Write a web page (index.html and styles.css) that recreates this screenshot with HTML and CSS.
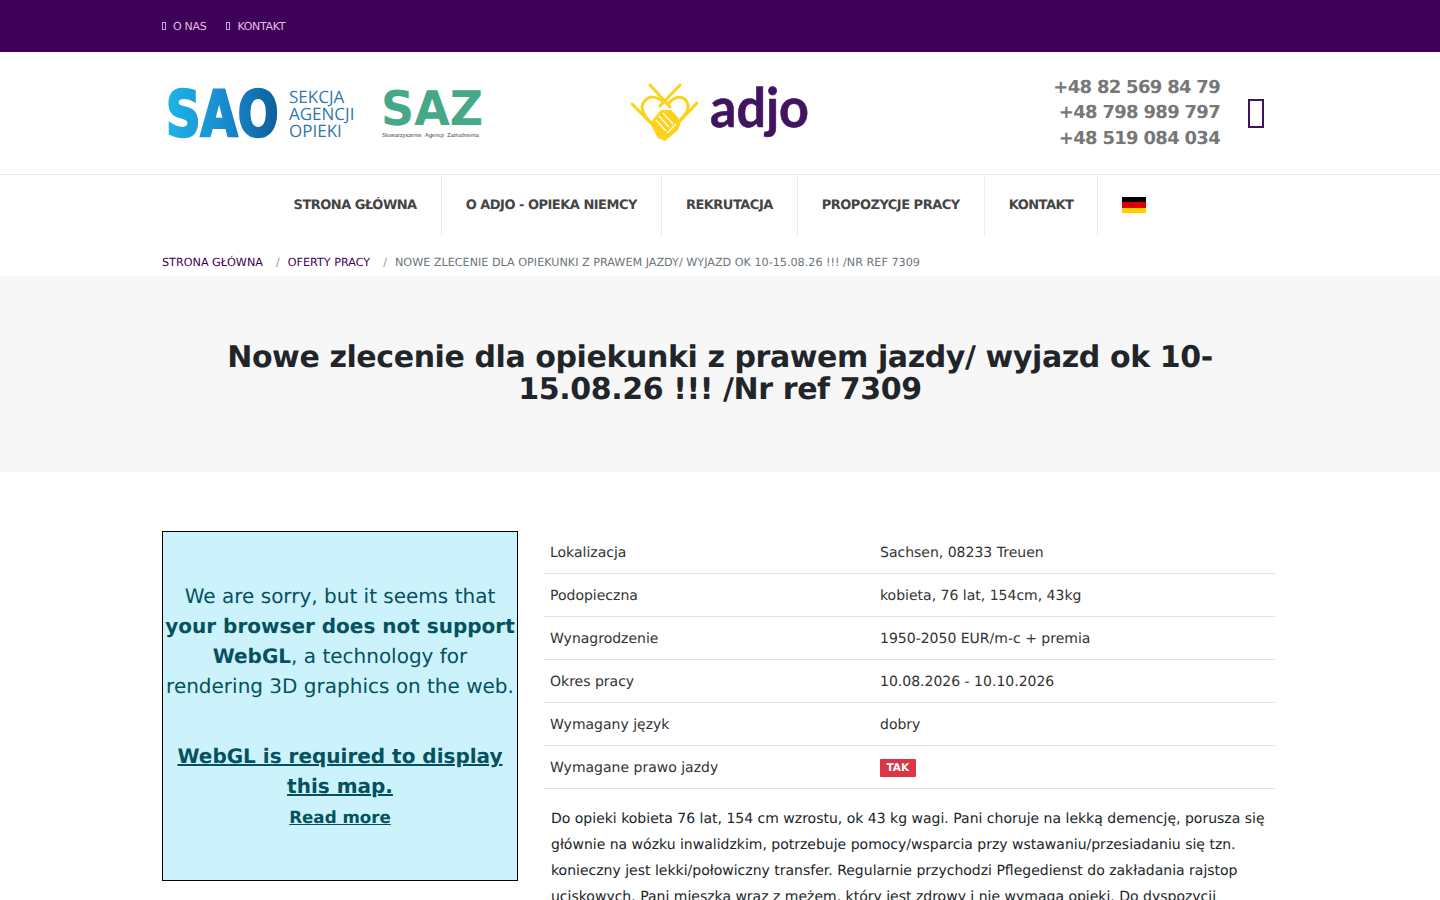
FILE: index.html
```html
<!DOCTYPE html>
<html lang="pl">
<head>
    <meta charset="UTF-8">
    <title>Nowe zlecenie dla opiekunki z prawem jazdy</title>
    <link rel="stylesheet" href="styles.css">
</head>
<body>

<div class="topbar">
    <div class="wrap topbar-in">
        <a class="top-link"><i class="tofu"></i>O NAS</a>
        <a class="top-link"><i class="tofu"></i>KONTAKT</a>
    </div>
</div>

<header class="wrap head">
    <div class="logos">
        <svg class="logo-sao" width="194" height="60" viewBox="0 0 194 60">
            <defs>
                <linearGradient id="saoFill" x1="0" x2="1" y1="0" y2="0">
                    <stop offset="0" stop-color="#1fb4e8"/>
                    <stop offset="0.55" stop-color="#1788cc"/>
                    <stop offset="1" stop-color="#0d5f9a"/>
                </linearGradient>
            </defs>
            <text class="sao-mark" transform="translate(2 53) scale(1 1.32)" fill="url(#saoFill)" stroke="url(#saoFill)">SAO</text>
            <text class="sao-text" x="125" y="20">SEKCJA</text>
            <text class="sao-text" x="125" y="37">AGENCJI</text>
            <text class="sao-text" x="125" y="54">OPIEKI</text>
        </svg>
        <svg class="logo-saz" width="100" height="52" viewBox="0 0 100 52">
            <text class="saz-mark" transform="translate(0 38) scale(1 1.04)">SAZ</text>
            <text class="saz-text" x="1" y="50">Stowarzyszenie Agencji Zatrudnienia</text>
        </svg>
    </div>
    <svg class="logo-adjo" width="182" height="64" viewBox="0 0 182 64">
        <g fill="none" stroke="#fcd31a" stroke-width="3" stroke-linecap="round">
            <path d="M21 4 L41 26 M51 4 L31 25 M3 23 L22 42 M68 22 L52 39"/>
            <path d="M21 41 C13 32 11 26 15 21 C20 14 28 15 34 21 M40 22 C46 15 54 14 58 21 C61 27 58 32 52 38"/>
        </g>
        <path d="M21 42 L32 29 L42 29 L47 34 L52 41 L49 49 L36 60 L29 57 Z" fill="#fcd31a"/>
        <g fill="none" stroke="#fff" stroke-width="1.2">
            <path d="M27 39 L37 50 M30 35 L40 46 M34 32 L44 43 M38 52 L47 43"/>
        </g>
        <text class="adjo-mark" transform="translate(81 46) scale(1 1.05)">adjo</text>
    </svg>
    <div class="head-right">
        <div class="phones">
            <div>+48 82 569 84 79</div>
            <div>+48 798 989 797</div>
            <div>+48 519 084 034</div>
        </div>
        <i class="tofu-big"></i>
    </div>
</header>

<nav class="nav">
    <a class="nav-item">STRONA GŁÓWNA</a>
    <a class="nav-item">O ADJO - OPIEKA NIEMCY</a>
    <a class="nav-item">REKRUTACJA</a>
    <a class="nav-item">PROPOZYCJE PRACY</a>
    <a class="nav-item">KONTAKT</a>
    <a class="nav-item nav-flag"><span class="flag"></span></a>
</nav>

<div class="wrap crumbs">
    <a>STRONA GŁÓWNA</a>
    <span class="sep">/</span>
    <a>OFERTY PRACY</a>
    <span class="sep">/</span>
    <span class="current">NOWE ZLECENIE DLA OPIEKUNKI Z PRAWEM JAZDY/ WYJAZD OK 10-15.08.26 !!! /NR REF 7309</span>
</div>

<section class="hero">
    <h1>Nowe zlecenie dla opiekunki z prawem jazdy/ wyjazd ok 10-15.08.26 !!! /Nr ref 7309</h1>
</section>

<main class="wrap content">
    <aside class="map-box">
        <p>We are sorry, but it seems that <b>your browser does not support WebGL</b>, a technology for rendering 3D graphics on the web.</p>
        <p class="map-need"><a>WebGL is required to display this map.</a></p>
        <a class="map-more">Read more</a>
    </aside>
    <div class="details">
        <table class="facts">
            <tr><td>Lokalizacja</td><td>Sachsen, 08233 Treuen</td></tr>
            <tr><td>Podopieczna</td><td>kobieta, 76 lat, 154cm, 43kg</td></tr>
            <tr><td>Wynagrodzenie</td><td>1950-2050 EUR/m-c + premia</td></tr>
            <tr><td>Okres pracy</td><td>10.08.2026 - 10.10.2026</td></tr>
            <tr><td>Wymagany język</td><td>dobry</td></tr>
            <tr><td>Wymagane prawo jazdy</td><td><span class="badge">TAK</span></td></tr>
        </table>
        <p class="desc">Do opieki kobieta 76 lat, 154 cm wzrostu, ok 43 kg wagi. Pani choruje na lekką demencję, porusza się głównie na wózku inwalidzkim, potrzebuje pomocy/wsparcia przy wstawaniu/przesiadaniu się tzn. konieczny jest lekki/połowiczny transfer. Regularnie przychodzi Pflegedienst do zakładania rajstop uciskowych. Pani mieszka wraz z mężem, który jest zdrowy i nie wymaga opieki. Do dyspozycji</p>
    </div>
</main>

</body>
</html>
```

FILE: styles.css
```css
*{
    box-sizing: border-box;
}
html,body{
    margin: 0;
    padding: 0;
}
body{
    font-family: "DejaVu Sans", sans-serif;
    font-size: 14px;
    color: #212529;
    background: #fff;
    text-rendering: geometricPrecision;
}
svg{
    overflow: visible;
}

.wrap{
    width: 1116px;
    margin: 0 auto;
}

/* top bar */
.topbar{
    height: 52px;
    background: #3f0058;
}
.topbar-in{
    height: 52px;
    display: flex;
    align-items: center;
    gap: 20px;
}
.top-link{
    display: flex;
    align-items: center;
    font-size: 11px;
    letter-spacing: -0.3px;
    color: #e2bfe8;
}
.tofu{
    width: 4px;
    height: 8px;
    border: 1px solid #c9a3d4;
    margin-right: 7px;
}

/* header */
.head{
    height: 122px;
    display: grid;
    grid-template-columns: 1fr auto 1fr;
    align-items: center;
}
.logos{
    display: flex;
    align-items: center;
    gap: 23px;
}
.logo-sao{
    margin-left: 2px;
}
.sao-mark{
    font-family: "DejaVu Sans", sans-serif;
    font-weight: bold;
    font-size: 48px;
    stroke-width: 2px;
}
.sao-text{
    font-family: "Open Sans", sans-serif;
    font-size: 17px;
    fill: #2f79ad;
}
.saz-mark{
    font-family: "DejaVu Sans", sans-serif;
    font-weight: bold;
    font-size: 46px;
    fill: #47a887;
}
.saz-text{
    font-family: "Liberation Sans", sans-serif;
    font-size: 5.7px;
    word-spacing: 2px;
    fill: #444;
}
.adjo-mark{
    font-family: "Lato", sans-serif;
    font-weight: bold;
    font-size: 52px;
    fill: #42135f;
    stroke: #42135f;
    stroke-width: 0.6px;
}
.head-right{
    display: flex;
    align-items: center;
    justify-content: flex-end;
    gap: 28px;
    padding-right: 14px;
}
.phones{
    font-size: 18px;
    font-weight: bold;
    letter-spacing: -0.7px;
    line-height: 25.5px;
    text-align: right;
    color: #777;
}
.tofu-big{
    width: 16px;
    height: 29px;
    border: 2px solid #42135f;
}

/* menu */
.nav{
    height: 62px;
    border-top: 1px solid #e9e9e9;
    display: flex;
    justify-content: center;
}
.nav-item{
    display: flex;
    align-items: center;
    padding: 0 24px 1px;
    border-right: 1px solid #ececec;
    font-size: 13px;
    font-weight: bold;
    letter-spacing: -0.5px;
    color: #444;
}
.nav-flag{
    border-right: 0;
}
.flag{
    width: 24px;
    height: 16px;
    background: linear-gradient(#000 33.3%, #d00 33.3%, #d00 66.6%, #ffce00 66.6%);
}

/* breadcrumb */
.crumbs{
    height: 40px;
    display: flex;
    align-items: center;
    padding-top: 12px;
    font-size: 11.2px;
    color: #3f0058;
}
.sep{
    margin: 0 8px 0 13px;
    color: #999;
}
.current{
    color: #6c757d;
}

/* title */
.hero{
    height: 196px;
    padding-top: 66px;
    background: #f7f7f7;
}
.hero h1{
    width: 1000px;
    margin: 0 auto;
    font-size: 30px;
    letter-spacing: -0.4px;
    line-height: 32px;
    text-align: center;
    color: #212529;
}

/* content */
.content{
    display: flex;
    gap: 26px;
    padding-top: 59px;
}
.map-box{
    flex: none;
    width: 356px;
    height: 350px;
    padding-top: 49px;
    border: 1px solid #000;
    background: #ccf3fb;
    font-size: 20px;
    line-height: 30px;
    text-align: center;
    color: #055160;
}
.map-box p{
    margin: 0 0 40px;
}
.map-box .map-need{
    margin: 0;
    font-weight: bold;
    text-decoration: underline;
}
.map-more{
    display: block;
    margin-top: 1px;
    font-size: 16.7px;
    font-weight: bold;
    text-decoration: underline;
}
.details{
    flex: 1;
    min-width: 0;
}
.facts{
    width: 731px;
    border-collapse: collapse;
}
.facts td{
    height: 43px;
    padding: 2px 6px 0;
    border-bottom: 1px solid #e3e3e3;
    color: #333;
}
.facts tr:first-child td{
    height: 42px;
}
.facts td:first-child{
    width: 330px;
}
.badge{
    display: inline-block;
    margin-top: 1px;
    padding: 3px 6.5px;
    border-radius: 1px;
    background: #dc3545;
    color: #fff;
    font-size: 10.5px;
    font-weight: bold;
    line-height: 12px;
    vertical-align: middle;
}
.desc{
    margin: 17px 0 0 7px;
    line-height: 26px;
    color: #212529;
}
```
